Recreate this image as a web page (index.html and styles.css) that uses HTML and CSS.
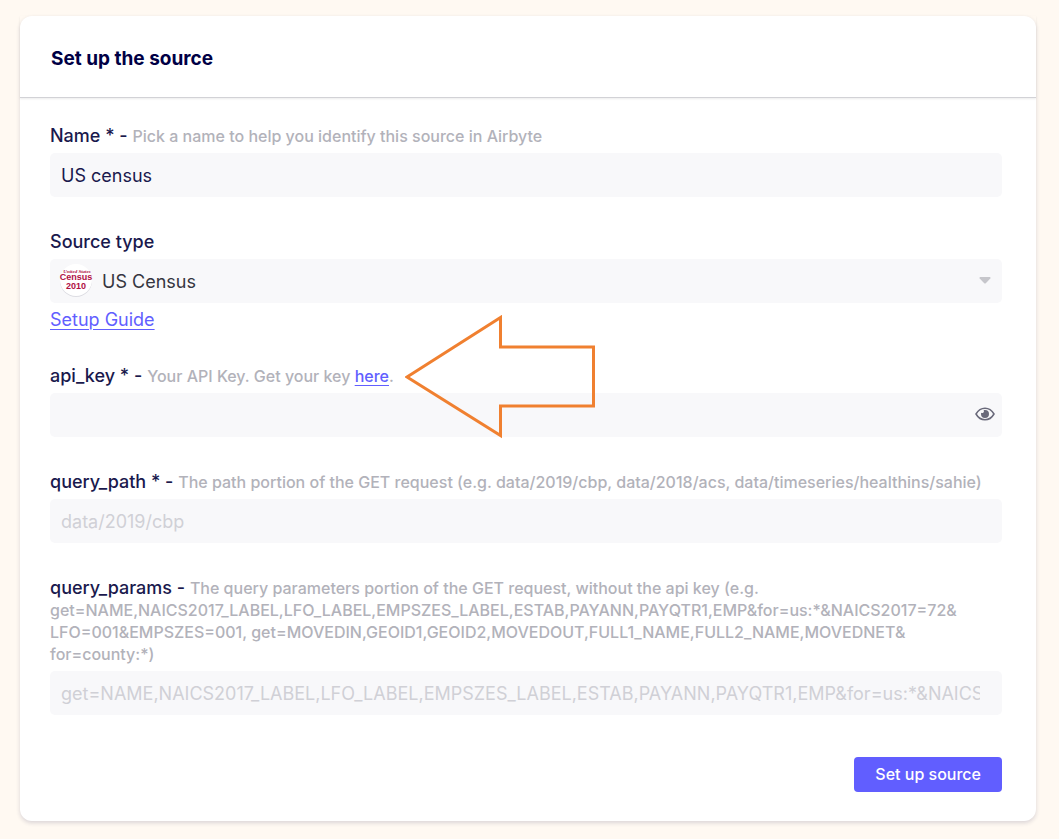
FILE: index.html
```
<!DOCTYPE html>
<html lang="en">
<head>
  <meta charset="UTF-8">
  <meta name="viewport" content="width=device-width, initial-scale=1.0">
  <title>Set up the source</title>
  <link rel="stylesheet" href="styles.css">
</head>
<body>
  <main class="card">
    <header class="card-header">
      <h1>Set up the source</h1>
    </header>

    <form class="source-form">
      <div class="field">
        <label for="name">Name * - <span class="hint">Pick a name to help you identify this source in Airbyte</span></label>
        <input class="control" type="text" id="name" value="US census">
      </div>

      <div class="field">
        <label for="sourceType">Source type</label>
        <div class="control-wrap">
          <select class="control source-select" id="sourceType">
            <option>US Census</option>
          </select>
          <svg class="source-logo" width="34" height="34" viewBox="0 0 34 34" aria-hidden="true">
            <circle cx="17" cy="18" r="16" fill="#dcdce2"/>
            <circle cx="17" cy="17" r="16" fill="#fff"/>
            <text class="logo-small" x="18" y="10" text-anchor="middle">United States</text>
            <text class="logo-name" x="17" y="17" text-anchor="middle">Census</text>
            <text class="logo-name" x="17" y="26" text-anchor="middle">2010</text>
          </svg>
          <svg class="select-arrow" width="12" height="7" viewBox="0 0 12 7" aria-hidden="true">
            <path d="M1 0h10q1 .6.3 1.400L7 6q-1 1-2 0L.7 1.400Q0 .6 1 0z" fill="#c6c6cb"/>
          </svg>
        </div>
        <a class="guide-link" href="#">Setup Guide</a>
      </div>

      <div class="field">
        <label for="apiKey">api_key * - <span class="hint">Your API Key. Get your key <a href="#">here</a>.</span></label>
        <div class="control-wrap">
          <input class="control" type="password" id="apiKey">
          <button class="eye-btn" type="button" aria-label="Show api_key">
            <svg width="20" height="14" viewBox="0 0 20 14">
              <path d="M1 7C3.200 3.200 6.300 1.200 10 1.200S16.800 3.200 19 7c-2.200 3.800-5.300 5.800-9 5.800S3.200 10.800 1 7z" fill="none" stroke="#69697a" stroke-width="1.500"/>
              <path d="M10 3a4 4 0 1 1-4 4c0-.4.100-.8.200-1.200.4.300 1 .4 1.500.2.800-.2 1.300-.9 1.200-1.700 0-.4-.1-.7-.3-1C9 3.100 9.500 3 10 3z" fill="#69697a"/>
            </svg>
          </button>
          <!-- arrow pointing at the key link -->
          <svg class="callout-arrow" width="192" height="124" viewBox="0 0 192 124" aria-hidden="true">
            <path d="M2 62 95.500 2.500V32H188.500v59H95.500v29.500z" fill="none" stroke="#f08030" stroke-width="3"/>
          </svg>
        </div>
      </div>

      <div class="field">
        <label for="queryPath">query_path * - <span class="hint">The path portion of the GET request (e.g. data/2019/cbp, data/2018/acs, data/timeseries/healthins/sahie)</span></label>
        <input class="control" type="text" id="queryPath" placeholder="data/2019/cbp">
      </div>

      <div class="field">
        <label for="queryParams">query_params - <span class="hint">The query parameters portion of the GET request, without the api key (e.g. get=NAME,NAICS2017_LABEL,LFO_LABEL,EMPSZES_LABEL,ESTAB,PAYANN,PAYQTR1,EMP&amp;for=us:*&amp;NAICS2017=72&amp;<wbr>LFO=001&amp;EMPSZES=001, get=MOVEDIN,GEOID1,GEOID2,MOVEDOUT,FULL1_NAME,FULL2_NAME,MOVEDNET&amp;<wbr>for=county:*)</span></label>
        <input class="control params-input" type="text" id="queryParams" placeholder="get=NAME,NAICS2017_LABEL,LFO_LABEL,EMPSZES_LABEL,ESTAB,PAYANN,PAYQTR1,EMP&amp;for=us:*&amp;NAICS2017=72&amp;LFO=001&amp;EMPSZES=001">
      </div>

      <div class="actions">
        <button class="submit-btn" type="submit">Set up source</button>
      </div>
    </form>
  </main>
</body>
</html>
```
FILE: styles.css
```
:root {
  --primary: #615eff;
  --title: #000045;
  --text: #1a194d;
  --muted: #b2b2ba;
  --bg: #fff9f2;
  --control-bg: #f8f8fa;
}
* {
  box-sizing: border-box;
}
body {
  margin: 0;
  padding: 16px 23px 18px 20px;
  background-color: var(--bg);
  color: var(--text);
  font-family: Inter, 'Liberation Sans', sans-serif;
  font-size: 18px;
  line-height: 22px;
}
.card {
  background-color: #fff;
  border-radius: 12px;
  box-shadow: 0 2px 4px rgba(26, 25, 77, 0.16);
}
.card-header {
  padding: 32px 31px 27px;
  border-bottom: 1px solid #d2d2d6;
  box-shadow: 0 1px 2px rgba(0, 0, 0, 0.08);
}
.card-header h1 {
  margin: 0;
  color: var(--title);
  font-size: 19px;
  font-weight: 700;
  line-height: 22px;
}
.source-form {
  padding: 27px 34px 29px 30px;
}
.field {
  margin-bottom: 34px;
}
.field label {
  display: block;
  margin-bottom: 6px;
  font-weight: 500;
}
.hint {
  color: var(--muted);
  font-size: 16px;
  line-height: 20px;
}
a {
  color: var(--primary);
  text-decoration: underline;
  text-underline-offset: 3px;
  text-decoration-thickness: 1px;
}
.control-wrap {
  position: relative;
}
.control {
  display: block;
  width: 100%;
  height: 44px;
  padding: 0 11px;
  border: none;
  border-radius: 5px;
  background-color: var(--control-bg);
  color: var(--text);
  font-family: inherit;
  font-size: 18px;
}
.control::placeholder {
  color: #d0d0d6;
}
.params-input {
  padding-right: 22px;
}
.source-select {
  appearance: none;
  padding-left: 52px;
  color: #353540;
}
.source-logo {
  position: absolute;
  left: 9px;
  top: 4px;
}
.logo-small {
  font: italic bold 5px 'Liberation Serif', serif;
  fill: #b01045;
}
.logo-name {
  font: bold 9px 'Liberation Sans', sans-serif;
  fill: #b01045;
}
.select-arrow {
  position: absolute;
  right: 11px;
  top: 18px;
  pointer-events: none;
}
.guide-link {
  display: block;
  width: fit-content;
  margin-top: 6px;
}
.eye-btn {
  position: absolute;
  right: 7px;
  top: 10px;
  display: flex;
  padding: 4px 0;
  border: none;
  background: none;
  cursor: pointer;
}
.callout-arrow {
  position: absolute;
  left: 355px;
  top: -78px;
  pointer-events: none;
}
.actions {
  display: flex;
  justify-content: flex-end;
  padding-top: 8px;
}
.submit-btn {
  height: 35px;
  padding: 0 21px 2px;
  border: none;
  border-radius: 4px;
  background-color: var(--primary);
  color: #fff;
  font-family: inherit;
  font-size: 16px;
  font-weight: 500;
  cursor: pointer;
}
```
